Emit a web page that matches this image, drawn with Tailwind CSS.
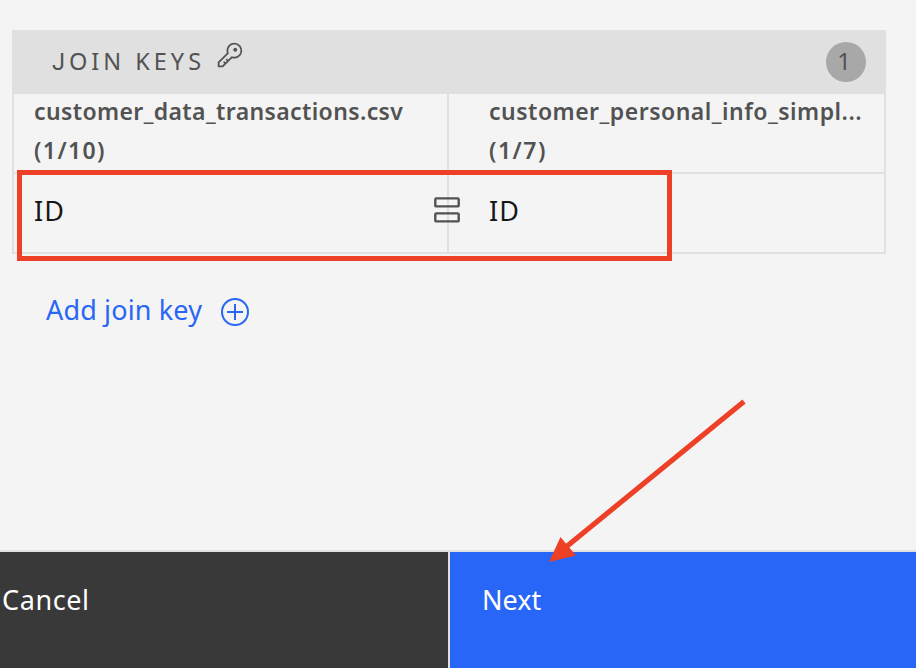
<!DOCTYPE html>
<html lang="en">
<head>
<meta charset="utf-8">
<title>Join keys</title>
<script src="https://cdn.jsdelivr.net/npm/@tailwindcss/browser@4"></script>
</head>
<body class="relative flex h-screen w-screen flex-col overflow-hidden bg-[#f4f4f4] font-['Noto_Sans',sans-serif] text-[#525252]">
  <main class="flex-1 pt-[30px] pl-3">
    <section class="h-[224px] w-[874px] border-2 border-[#e0e0e0]">
      <header class="flex h-[62px] items-center bg-[#e0e0e0] pr-[18px] pb-[2px] pl-[38px]">
        <h2 class="mb-[2px] w-[164px] whitespace-nowrap text-[23.5px] leading-8 font-normal tracking-[4px]"><span class="font-[Roboto]">J</span>OIN KEYS</h2>
        <svg class="mb-[14px] size-[28px]" viewBox="0 0 32 32" fill="currentColor"><path d="M21 2a8.998 8.998 0 0 0-8.612 11.612L2 24v6h6l10.388-10.388A9 9 0 1 0 21 2Zm0 16a7.013 7.013 0 0 1-2.032-.302l-1.147-.348-.847.847-3.181 3.181L12.414 20 11 21.414l1.379 1.379-1.586 1.586L9.414 23 8 24.414l1.379 1.379L7.172 28H4v-3.172l9.802-9.802.848-.847-.348-1.147A7 7 0 1 1 21 18Z"/><circle cx="22" cy="10" r="2.2"/></svg>
        <span class="ml-auto flex size-10 items-center justify-center rounded-full bg-[#a8a8a8] pr-1 pb-[3px] text-[24px] font-normal">1</span>
      </header>
      <div class="grid h-[80px] grid-cols-[435px_435px] border-b-2 border-[#e0e0e0] text-[23px] leading-[39px] font-semibold">
        <div class="-mt-[2px] mb-[2px] pl-5 whitespace-nowrap"><p class="h-[39px] tracking-[0.38px]">customer_data_transactions.csv</p><p class="tracking-[1.4px]">(1/10)</p></div>
        <div class="-ml-[2px] h-[78px] border-l-2 border-[#e0e0e0] pl-10 whitespace-nowrap"><p class="-mt-[2px] h-[39px] tracking-[0.5px]">customer_personal_info_simpl...</p><p class="tracking-[1.5px]">(1/7)</p></div>
      </div>
      <div class="grid h-[78px] grid-cols-[435px_435px] text-[27px] leading-[74px] text-[#161616]">
        <div class="flex justify-between border-r-2 border-[#e0e0e0] pl-5"><span class="tracking-[1px]">ID</span>
          <svg class="-mr-[13px] mt-[22px] h-[28px] w-[26px] text-[#525252]" viewBox="0 0 26 28" fill="none" stroke="currentColor" stroke-width="2.4"><rect x="1.3" y="2.4" width="23.4" height="8" rx="1"/><rect x="1.3" y="17.4" width="23.4" height="8" rx="1"/></svg>
        </div>
        <div class="pl-10 tracking-[1px]">ID</div>
      </div>
    </section>
    <button class="mt-[33px] ml-[34px] flex h-[46px] items-center text-[#2a66f4]">
      <span class="w-[175px] text-left whitespace-nowrap text-[27px] leading-[46px] font-normal tracking-[0.15px]">Add join key</span>
      <svg class="mt-[3px] size-7" viewBox="0 0 28 28" fill="none" stroke="currentColor" stroke-width="2"><circle cx="14" cy="14" r="13"/><path d="M14 6v16M6 14h16"/></svg>
    </button>
  </main>
  <footer class="grid h-[118px] grid-cols-[448px_1fr] gap-[2px] border-t-2 border-[#e0e0e0] bg-[#e0e0e0] text-[27px] leading-[96px] text-white">
    <button class="flex items-start bg-[#393939] pl-[2px] tracking-[0.6px]">Cancel</button>
    <button class="flex items-start bg-[#2766f6] pl-8">Next</button>
  </footer>
  <div class="absolute top-[170px] left-[17px] h-[91px] w-[655px] border-[5px] border-[#ed4026]"></div>
  <svg class="absolute top-0 left-0 h-[668px] w-[916px] pointer-events-none" viewBox="0 0 916 668"><path d="M744 401.5 566 547" stroke="#ed4026" stroke-width="5.2"/><path d="M549 562 560.5 537 576 555.5Z" fill="#ed4026"/></svg>
</body>
</html>
